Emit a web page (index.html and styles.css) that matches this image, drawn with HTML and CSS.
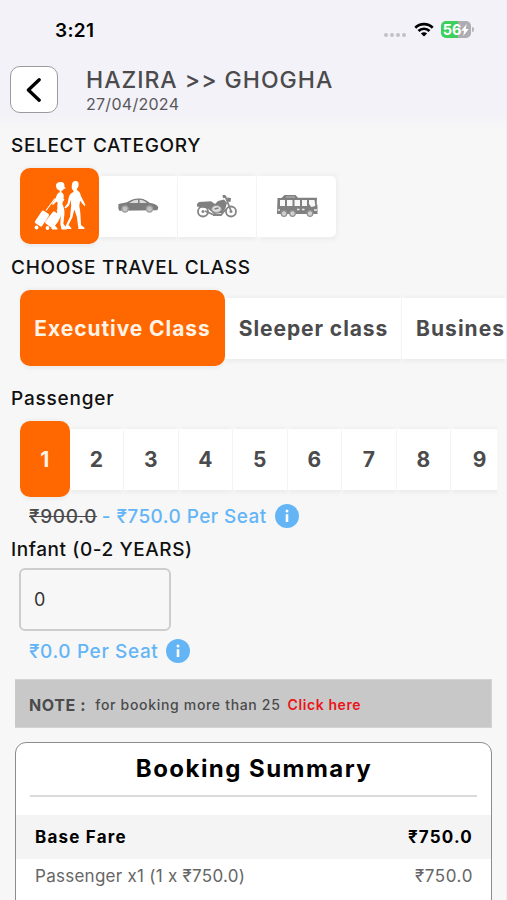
FILE: index.html
```html
<!DOCTYPE html>
<html lang="en">
<head>
<meta charset="utf-8">
<meta name="viewport" content="width=device-width">
<title>Hazira to Ghogha</title>
<link rel="stylesheet" href="styles.css">
</head>
<body>
<div class="screen">
  <header class="top">
    <div class="status">
      <span class="clock">3:21</span>
      <div class="indicators">
        <div class="dots"><i></i><i></i><i></i><i></i></div>
        <svg class="wifi" width="20" height="15" viewBox="0 0 20 15" fill="none" stroke="#000" stroke-width="2.7">
          <path d="M1.3 5.7a12.3 12.3 0 0 1 17.4 0M4.5 9a7.8 7.8 0 0 1 11 0"/>
          <path d="M10 14.6 6.9 11.5a4.4 4.4 0 0 1 6.2 0z" fill="#000" stroke="none"/>
        </svg>
        <div class="battery"><span>56</span><svg width="8" height="12" viewBox="0 0 8 12" fill="#fff"><path d="M5.6 0 .3 6.7h2.9L2.2 12l5.5-6.9H4.7z"/></svg></div>
        <i class="nub"></i>
      </div>
    </div>
    <div class="route">
      <button class="back" aria-label="Back"><svg width="16" height="24" viewBox="0 0 16 24" fill="none" stroke="#000" stroke-width="3.3" stroke-linecap="round" stroke-linejoin="round"><path d="M13.2 1.8 2.4 12l10.8 10.200"/></svg></button>
      <div>
        <h1>HAZIRA &gt;&gt; GHOGHA</h1>
        <p class="date">27/04/2024</p>
      </div>
    </div>
  </header>

  <h2 class="label category-label">SELECT CATEGORY</h2>
  <div class="tabs categories">
    <div class="tab on"><svg width="54" height="52" viewBox="0 0 54 52" fill="#fff">
      <g transform="rotate(34 9 38)"><rect x="5" y="31" width="8.500" height="15" rx="1.500"/></g>
      <g transform="rotate(38 20 39)"><rect x="15.500" y="32" width="8.500" height="15" rx="1.500"/></g>
      <circle cx="3.500" cy="47.500" r="1.900"/><circle cx="14.500" cy="48" r="1.900"/>
      <path d="M13 30.500 22 18.500M24 31 31 19" stroke="#fff" stroke-width="1.100"/>
      <path d="M23 5c.5-2.500 3-3.500 5.500-3 2.500.3 3.200 2 2.800 4.200l1.500 2.800-2-.5c-.4 1.700-1.200 2-2.300 2l-.2 1.700c2.400 1.300 2.900 3.300 2.200 6.300l-1.500 4 1.700 5c1.200 3.500.8 7 .3 10l-.6 6.500 3.600 4.200c.4 1-.3 1.300-1.300 1.300h-4.200l-1.200-5.500.5-8-2.500 5.500-3.300 4 2.500 3c.4.700 0 1-.8 1h-4.500l-1.200-1.700 4.800-7.300 1.700-11.500c-.4-2-.3-4 .2-6l-1.200-1.500-3.500 3.500-1-1 4-6.500c.8-3 1.800-5 4-5.300l-.5-1.700c-2-.6-3.800-2.500-3.500-5.500z"/>
      <path d="M42 1c2.700-.2 4 1.500 3.600 4-.1 1.900-.8 3-1.700 3.700l.2 1.600c2.500 1 3.200 3 3.600 5.200l4.800 9.500-1.100 1-4.400-5.200-.7 5.200c.8 3.500 1 6.500 1.200 9.500l.5 9.500 3.500 2.700c.3.800-.2 1.300-1 1.300h-5l-1.700-12.500-2.500-7-1.800 7.500-4 8 2.800 3c.4.700 0 1-.8 1h-4.200l-1.300-1.700 5-10.300 1.200-11.500-.6-5.500-1.500 5.500-3.500 3-1.200-1 3.100-4 1.400-6.500c.7-2.500 2.500-4.200 4.700-5l-.3-1.500c-1.300-1-1.700-2.500-1.500-4.500.2-3 .8-4.800 3.200-5z"/>
    </svg></div>
    <div class="tab"><svg width="42" height="18" viewBox="0 0 42 18">
      <path d="M1.500 7 10 5.300C14 2.500 18 1.200 23 1.500c4.500.2 8 3.200 10 4.600 4 .5 7.500 1.700 8.300 4.600l-1 2.500-38 .5-1-2.500z" fill="#7c7c7c"/>
      <path d="m12 6 5-2.800 4-.5V6zM22.500 2.800c3.500 0 5.500 1.500 7.500 3.200h-7.500z" fill="#dcdcdc"/>
      <g fill="#c4c4c4" stroke="#a2a2a2" stroke-width="1.300"><circle cx="8" cy="12" r="3"/><circle cx="32.500" cy="12" r="3"/></g>
    </svg></div>
    <div class="tab"><svg width="42" height="24" viewBox="0 0 42 24">
      <g fill="none" stroke="#858585" stroke-width="1.800"><circle cx="7" cy="17.500" r="5"/><circle cx="35" cy="17.500" r="5"/><path d="M29 1.500 35 17M17 21h8l5-6M9 17l9 4"/></g>
      <circle cx="7" cy="17.500" r="1.500" fill="#888"/><circle cx="35" cy="17.500" r="1.500" fill="#888"/>
      <path d="M1 10 3 8l12-.8 4 2.800 3-3 6-1.500L31 9l-1.500 5-3.500 5-8 1-6-5.500L1 12.500zM31 3.500l4 .5-.5 4-3-.5zM26.500 1h2.500v3h-2z" fill="#808080"/>
      <ellipse cx="20.500" cy="15" rx="4.800" ry="3.500" fill="#ddd" stroke="#999"/><path d="m18.500 15 4-1" stroke="#808080" stroke-width="1.500"/>
    </svg></div>
    <div class="tab"><svg width="42" height="24" viewBox="0 0 42 24">
      <path d="M1.500 4h4l3-3h11l2.500 2.800h19l-.3 6.200.8 1.500v8.500H1z" fill="#808080"/>
      <path d="M4 6h5v6H4zM11 6h5.500v6H11zM18.500 6H24v6h-5.500zM26 6h5v6h-5zM33 6h5.500l.8 6-4 1-2.300-3z" fill="#f7f7f7"/>
      <path d="M10 3h9" stroke="#bbb"/><path d="M21 15.500h2.500M26 15.500h2.500M2 16h2M38 16h3" stroke="#eee" stroke-width="1.500"/>
      <g fill="#d0d0d0" stroke="#909090" stroke-width="1.200"><circle cx="8" cy="19.500" r="2.800"/><circle cx="16.500" cy="19.500" r="2.800"/><circle cx="34" cy="19.500" r="2.800"/></g>
    </svg></div>
  </div>

  <h2 class="label class-label">CHOOSE TRAVEL CLASS</h2>
  <div class="tabs classes">
    <div class="tab on">Executive Class</div>
    <div class="tab sleeper">Sleeper class</div>
    <div class="tab business">Busines</div>
  </div>

  <h2 class="label passenger-label">Passenger</h2>
  <div class="tabs seats">
    <div class="tab on">1</div><div class="tab">2</div><div class="tab">3</div><div class="tab">4</div><div class="tab">5</div><div class="tab">6</div><div class="tab">7</div><div class="tab">8</div><div class="tab">9</div>
  </div>
  <div class="price fare"><span><s>₹900.0</s> - ₹750.0 Per Seat</span><svg class="info" width="24" height="24" viewBox="0 0 24 24"><circle cx="12" cy="12" r="12" fill="#64b5f6"/><circle cx="12" cy="7" r="1.500" fill="#fff"/><path d="M12 10.200v7.800" stroke="#fff" stroke-width="2.600"/></svg></div>

  <h2 class="label infant-label">Infant (0-2 YEARS)</h2>
  <div class="field">0</div>
  <div class="price infant"><span>₹0.0 Per Seat</span><svg class="info" width="24" height="24" viewBox="0 0 24 24"><circle cx="12" cy="12" r="12" fill="#64b5f6"/><circle cx="12" cy="7" r="1.500" fill="#fff"/><path d="M12 10.200v7.800" stroke="#fff" stroke-width="2.600"/></svg></div>

  <div class="note"><b>NOTE :</b><span>for booking more than 25</span><a>Click here</a></div>

  <section class="summary">
    <h3>Booking Summary</h3>
    <div class="rule"></div>
    <div class="row total"><span>Base Fare</span><span>₹750.0</span></div>
    <div class="row"><span class="item">Passenger x1 (1 x ₹750.0)</span><span class="amount">₹750.0</span></div>
  </section>
</div>
</body>
</html>
```
FILE: styles.css
```css
* { box-sizing: border-box; margin: 0; padding: 0; }
body { background: #f7f7f7; font-family: Inter, "Noto Sans", sans-serif; color: #111; }
.screen { height: 900px; overflow: hidden; border-right: 1px solid #ededf3; }

.top { height: 131px; background: linear-gradient(#f3f2f8 115px, #f7f7f7 128px); }
.status { height: 60px; padding: 0 32px 0 55px; display: flex; justify-content: space-between; align-items: center; }
.clock { font-size: 19px; font-weight: 600; letter-spacing: .3px; color: #000; }
.indicators { display: flex; align-items: center; margin-top: -1px; }
.dots { display: flex; gap: 2px; margin: 10px 8px 0 0; }
.dots i { width: 4px; height: 4px; border-radius: 50%; background: #c2c1c7; }
.wifi { margin-right: 7px; }
.battery { width: 30px; height: 17px; border-radius: 5px; background: linear-gradient(90deg, #3fcf5c 57%, #aeadb3 57%); color: #fff; font-size: 14.500px; font-weight: 700; display: flex; align-items: center; justify-content: center; }
.nub { width: 2px; height: 5px; margin-left: 1px; border-radius: 0 2px 2px 0; background: #b5b4ba; }
.route { display: flex; padding: 6px 0 0 10px; gap: 28px; }
.back { width: 48px; height: 47px; border: 1px solid #9b9b9e; border-radius: 10px; background: #fff; display: flex; align-items: center; justify-content: center; }
h1 { font-size: 23px; line-height: 28px; font-weight: 550; letter-spacing: 1px; color: #4b4b4d; }
.date { font-size: 16px; line-height: 20px; letter-spacing: .280px; color: #58585a; }

.label { height: 28px; line-height: 30px; padding-left: 11px; font-size: 19px; font-weight: 520; color: #111; white-space: nowrap; }
.category-label { letter-spacing: .650px; }
.class-label { letter-spacing: .720px; margin-top: 9px; }
.passenger-label { letter-spacing: .800px; margin-top: 18px; }
.infant-label { letter-spacing: .580px; margin-top: 7px; }

.tabs { display: flex; align-items: center; height: 76px; margin-left: 20px; font-size: 21px; font-weight: 700; color: #4b4b4d; }
.tab { height: 61px; flex: none; display: flex; align-items: center; justify-content: center; background: #fff; white-space: nowrap; border-right: 1px solid #f5f5f5; box-shadow: 0 -4px 3px -2px #efefef, 0 4px 3px -1px #ededed; }
.tab.on { height: 76px; border: 0; border-radius: 10px; background: #ff6700; color: #fff3e6; position: relative; }
.categories { margin-top: 9px; }
.categories .tab { width: 79px; }
.categories .tab:last-child { border: 0; border-radius: 0 5px 5px 0; box-shadow: 2px -3px 4px -1px #efefef, 2px 4px 4px -1px #ededed; }
.classes { margin-top: 9px; width: 486px; clip-path: inset(-10px 0); letter-spacing: .920px; }
.classes .on { width: 205px; }
.classes .sleeper { width: 177px; padding-left: 1px; }
.classes .business { justify-content: flex-start; padding-left: 14px; width: 104px; border: 0; letter-spacing: 1.050px; }
.seats { margin-top: 9px; width: 477px; clip-path: inset(-10px 0); }
.seats .tab { width: 54.500px; }
.seats .on { width: 49.500px; }
.seats .tab:last-child { width: 58px; }

.price { display: flex; align-items: center; gap: 8px; height: 24px; margin: 7px 0 0 29px; font-size: 19px; font-weight: 500; letter-spacing: .620px; color: #64b5f6; }
.fare { letter-spacing: .430px; }
.price s { color: #4b4b4d; letter-spacing: .700px; margin-right: -1px; }
.field { width: 152px; height: 63px; margin: 5px 0 0 19px; padding-left: 13px; border: 2px solid #cdcdcd; border-radius: 6px; font-size: 18px; line-height: 60px; color: #333; }
.infant { margin-top: 8px; }

.note { margin: 16px 14px 0 15px; height: 49px; padding: 2px 0 0 14px; display: flex; align-items: center; background: #c8c8c8; border: 1px solid #d4d4d4; border-left: 0; color: #4b4b4d; font-size: 14px; font-weight: 550; }
.note b { font-size: 16px; font-weight: 650; letter-spacing: .630px; margin-right: 9px; }
.note span { letter-spacing: .680px; margin-right: 7px; }
.note a { font-weight: 600; letter-spacing: .600px; color: #ea1418; }

.summary { margin: 14px 14px 0 15px; height: 200px; border: 1px solid #8c8c8c; border-radius: 11px; background: #fff; }
.summary h3 { height: 52px; line-height: 52px; text-align: center; font-size: 24px; font-weight: 700; letter-spacing: 1.450px; color: #000; padding-left: 1px; }
.rule { height: 2px; background: #dadada; margin: 0 14px 18px; }
.row { display: flex; justify-content: space-between; align-items: center; height: 34px; padding: 0 18px 0 19px; font-size: 17px; color: #666; }
.total { height: 44px; background: #f4f4f4; font-weight: 700; color: #000; letter-spacing: 1.200px; }
.item { letter-spacing: .270px; }
.amount { letter-spacing: .600px; }
```
